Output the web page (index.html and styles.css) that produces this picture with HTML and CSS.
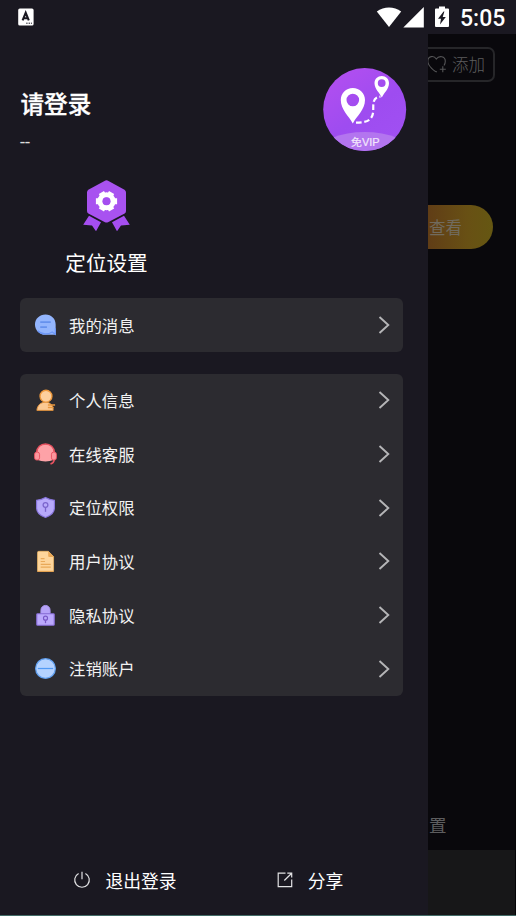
FILE: index.html
```html
<!DOCTYPE html>
<html lang="zh-CN">
<head>
<meta charset="utf-8">
<title>定位设置</title>
<link rel="stylesheet" href="styles.css">
</head>
<body>
<div class="screen">
  <header class="status">
    <svg class="ime" width="16" height="18" viewBox="0 0 16 18"><rect x="0.2" y="0.5" width="15.4" height="17" rx="1.6" fill="#fff"/><path d="M4.6 12.3L7.7 4.8L10.8 12.3M5.7 10.2H9.7" fill="none" stroke="#1a1821" stroke-width="2.1"/><path d="M8.2 15.2h1.4M10.6 15.2H12M12.9 15.2h1.1" stroke="#1a1821" stroke-width="1"/></svg>
    <div class="signals">
      <svg width="26" height="22" viewBox="0 0 26 22"><path d="M.8 5.6C8 .1 18 .1 25.2 5.6L13 21Z" fill="#fff"/></svg>
      <svg width="21" height="22" viewBox="0 0 21 22"><path d="M20.8 1V21.5H.3Z" fill="#fff"/></svg>
      <svg class="battery" width="14" height="22" viewBox="0 0 14 22"><path d="M4 .5h6v2h3q1 0 1 1V20q0 1-1 1H1q-1 0-1-1V3.5q0-1 1-1h3Z" fill="#fff"/><path d="M8.6 5.5L3 12.8H6L5 18.6L10.8 11H7.7L9.4 5.5Z" fill="#1a1821"/></svg>
      <span class="clock">5:05</span>
    </div>
  </header>
  <div class="body">
    <aside class="drawer">
      <section class="profile">
        <div class="account"><h1>请登录</h1><p>--</p></div>
        <svg class="avatar" width="84" height="84" viewBox="0 0 84 84">
          <defs><linearGradient id="violet" x1="0" y1="0" x2=".7" y2="1"><stop offset="0" stop-color="#b64ff0"/><stop offset=".6" stop-color="#9e4cf0"/><stop offset="1" stop-color="#a050f2"/></linearGradient><clipPath id="disc"><circle cx="41.7" cy="41.6" r="41.5"/></clipPath></defs>
          <circle cx="41.7" cy="41.6" r="41.5" fill="url(#violet)"/>
          <ellipse cx="41.7" cy="83" rx="45" ry="19" fill="#b375ef" clip-path="url(#disc)"/>
          <path fill="#fff" fill-rule="evenodd" d="M29.8 55.5C26 48 17.8 42 17.8 32C17.8 25 23 20 29.8 20S42 25 42 32C42 42 33.6 48 29.8 55.5ZM29.8 25.7a6.3 6.3 0 1 0 0 12.6a6.3 6.3 0 1 0 0-12.6Z"/>
          <path fill="#fff" fill-rule="evenodd" d="M58.8 29.5C57 25 51.5 21 51.5 15.2C51.5 11 54.7 8 58.8 8S66 11 66 15.2C66 21 60.8 25 58.8 29.5ZM58.7 11.2a3.9 3.9 0 1 0 0 7.8a3.9 3.9 0 1 0 0-7.8Z"/>
          <path d="M33 54.7C43 54.7 49 52.5 50 45C51 38 48 29.5 57.5 28.7" fill="none" stroke="#fff" stroke-width="2.2" stroke-dasharray="5.5 2.7"/>
          <text class="vip" x="28" y="78" textLength="28.5" lengthAdjust="spacingAndGlyphs">免VIP</text>
        </svg>
      </section>

      <section class="feature">
        <svg width="48" height="52" viewBox="0 0 48 52"><path d="M23.5 .2Q24.5 .2 25.5 .9L41.5 9.8Q43 10.8 43 12.5V31Q43 32.6 41.7 33.4L25 42.2Q23.5 43 22 42.2L5.3 33.4Q4 32.6 4 31V12.5Q4 10.8 5.3 9.8L21.5 .9Q22.5 .2 23.5 .2Z" fill="#a852f0"/><path d="M6 35.7L18 42.3L13 51.3L9 45.5L.2 44.8ZM41 35.7L29 42.3L34 51.3L38 45.5L46.8 44.8Z" fill="#a54ef0"/><circle cx="23.5" cy="21.2" r="6.4" fill="none" stroke="#fff" stroke-width="5.2"/><g stroke="#fff" stroke-width="6"><path d="M28.5 21.2H34.1M18.5 21.2H12.9M26 16.9L28.6 12.4M21 16.9L18.4 12.4M26 25.5L28.6 30M21 25.5L18.4 30"/></g><circle cx="23.5" cy="21.2" r="4" fill="#a54ef0"/></svg>
        <span>定位设置</span>
      </section>

      <nav class="card single">
        <a class="row"><svg class="icon" viewBox="0 0 24 24"><path d="M12 1.5C18.3 1.5 22.6 6 22.6 12V16.5L22.8 22.8H12C5.7 22.8 1 18 1 12S5.7 1.5 12 1.5Z" fill="#93b5fd"/><path d="M4 18.5C8 23 15 22.5 19 19.8L22.3 22.3V16" fill="none" stroke="#6c96f6" stroke-width="1.3"/><path d="M6.5 9.5h11M6.5 14.7h7" stroke="#6691ed" stroke-width="1.7"/></svg><span>我的消息</span><svg class="arrow" viewBox="0 0 12 18"><path d="M1.5 1L10.3 9L1.5 17"/></svg></a>
      </nav>

      <nav class="card group">
        <a class="row"><svg class="icon" viewBox="0 0 24 24"><path d="M3 22.3C3.5 16.8 7 14.2 11 13.8C16 13.5 20 16 20 22.3Z" fill="#fbc993" stroke="#e7953e"/><circle cx="12.5" cy="7.5" r="6.2" fill="#fdcf9d" stroke="#ef9a3e" stroke-width="1.4"/><path d="M14.5 16.8h7.5M14.5 19.4h6" stroke="#e9983f" stroke-width="1.6"/></svg><span>个人信息</span><svg class="arrow" viewBox="0 0 12 18"><path d="M1.5 1L10.3 9L1.5 17"/></svg></a>
        <a class="row"><svg class="icon" viewBox="0 0 24 24"><path d="M3 11C3 4.5 7 1.2 12 1.2S21 4.5 21 11V17.5Q12 21 3 17.5Z" fill="#fda2a7"/><path d="M2.6 10C3 4.5 7 1 12 1S21 4.5 21.4 10" fill="none" stroke="#e95260" stroke-width="1.5"/><rect x=".6" y="9.5" width="5.2" height="8.3" rx="2.3" fill="#fc969d" stroke="#e95260"/><rect x="18.2" y="9.5" width="5.2" height="8.3" rx="2.3" fill="#fc969d" stroke="#e95260"/><path d="M21 17.8Q20.8 20.8 17.2 22" fill="none" stroke="#e95260" stroke-width="1.7"/></svg><span>在线客服</span><svg class="arrow" viewBox="0 0 12 18"><path d="M1.5 1L10.3 9L1.5 17"/></svg></a>
        <a class="row"><svg class="icon" viewBox="0 0 24 24"><path d="M12 1.6Q16 4 21.3 4.4V12.5C21.3 17.5 17 20.7 12 22.4C7 20.7 2.7 17.5 2.7 12.5V4.4Q8 4 12 1.6Z" fill="#b8aafa" stroke="#8875dc" stroke-width="1.2"/><circle cx="12" cy="9.3" r="2.5" fill="none" stroke="#7b65cc" stroke-width="1.3"/><path d="M12 11.7V16.5" stroke="#7b65cc" stroke-width="1.4"/></svg><span>定位权限</span><svg class="arrow" viewBox="0 0 12 18"><path d="M1.5 1L10.3 9L1.5 17"/></svg></a>
        <a class="row"><svg class="icon" viewBox="0 0 24 24"><path d="M5 1.4H15L20.4 6.8V21.8Q20.4 22.4 19.8 22.4H4.3Q3.7 22.4 3.7 21.8V2.5Q3.7 1.4 5 1.4Z" fill="#fdd59b" stroke="#eeb766" stroke-width=".8"/><path d="M14.8 1.4L20.6 7.3H16Q14.8 7.3 14.8 6.2Z" fill="#eba855"/><path d="M7 9h4M7 12h4.5M7 15h10.5M7 17.8h10.5" stroke="#e9a958" stroke-width="1.3"/><path d="M3.4 22.3H20.6" stroke="#e5a04c"/></svg><span>用户协议</span><svg class="arrow" viewBox="0 0 12 18"><path d="M1.5 1L10.3 9L1.5 17"/></svg></a>
        <a class="row"><svg class="icon" viewBox="0 0 24 24"><path d="M7.2 10V6.5A4.8 5 0 0 1 16.8 6.5V10Z" fill="#b6a3f8" stroke="#ab96f1"/><rect x="2.9" y="10.2" width="18.2" height="12" rx=".8" fill="#bba9fc" stroke="#886dd7" stroke-width="1.2"/><circle cx="12" cy="14.8" r="2.1" fill="none" stroke="#7858c7" stroke-width="1.2"/><path d="M12 17v3" stroke="#7858c7" stroke-width="1.3"/></svg><span>隐私协议</span><svg class="arrow" viewBox="0 0 12 18"><path d="M1.5 1L10.3 9L1.5 17"/></svg></a>
        <a class="row"><svg class="icon" viewBox="0 0 24 24"><circle cx="12" cy="12" r="10.3" fill="#b5d3ff" stroke="#62a1f1" stroke-width="1.3"/><path d="M4 12h16" stroke="#529af4" stroke-width="1.3"/></svg><span>注销账户</span><svg class="arrow" viewBox="0 0 12 18"><path d="M1.5 1L10.3 9L1.5 17"/></svg></a>
      </nav>

      <footer class="actions">
        <a class="logout"><svg width="18" height="18" viewBox="0 0 18 18"><path d="M5.6 2.5A7.3 7.3 0 1 0 12.4 2.5M9 .7V8.3"/></svg><span>退出登录</span></a>
        <a class="share"><svg width="16" height="16" viewBox="0 0 16 16"><path d="M8.5 1.2H1.2V14.7H14.7V7.5M7.3 8.5L14.7 1.2M10.3 1.2H14.7V5.6"/></svg><span>分享</span></a>
      </footer>
    </aside>
    <main class="backdrop">
      <div class="add"><svg width="20" height="19" viewBox="0 0 20 19"><path d="M10 16.8C8 16.8.8 11 .8 6.2C.8.8 7 .2 9.3 4C12 .2 18.3 1 18.3 6.2Q18.3 8.5 17 10.5M15.8 11.2V17.2M12.8 14.2H18.8"/></svg><span>添加</span></div>
      <div class="view">查看</div>
      <div class="label">置</div>
      <div class="tray"></div>
    </main>
  </div>
</div>
</body>
</html>
```
FILE: styles.css
```css
* { box-sizing: border-box; }
body {
  margin: 0;
  background: #1a1821;
  color: #fff;
  font-family: "Noto Sans CJK SC", "Noto Sans", sans-serif;
}
.screen {
  width: 516px;
  height: 916px;
  display: flex;
  flex-direction: column;
  overflow: hidden;
  border-bottom: 1px solid #426b67;
}
.status {
  height: 34px;
  flex: none;
  display: flex;
  justify-content: space-between;
  align-items: center;
  padding: 0 11px 0 18px;
}
.signals { display: flex; align-items: center; gap: 1px; }
.signals svg:first-child { margin-left: -1px; }
.battery { margin-left: 10px; }
.clock {
  width: 45px;
  margin-left: 10px;
  font: 500 23px/34px Roboto, sans-serif;
  white-space: nowrap;
  padding-top: 3px;
}
.body { flex: 1; display: flex; min-height: 0; }
.drawer {
  width: 428px;
  flex: none;
  display: flex;
  flex-direction: column;
  padding: 0 25px 0 20px;
}
.profile {
  display: flex;
  justify-content: space-between;
  height: 145px;
  padding-top: 34px;
  margin-right: -4px;
}
.account h1 {
  margin: 18px 0 0 .5px;
  font-size: 23.6px;
  line-height: 34px;
  font-weight: 500;
  -webkit-text-stroke: .3px #fff;
}
.account p { margin: 10px 0 0; font: 18px/24px Roboto, sans-serif; color: #ddd; }
.vip { font: 10px "Liberation Sans", "Noto Sans CJK SC", sans-serif; fill: #f2e5fc; stroke: #f2e5fc; stroke-width: .2px; }
.feature {
  width: 173px;
  height: 119px;
  display: flex;
  flex-direction: column;
  align-items: center;
  padding-top: 1px;
}
.feature svg { margin-left: 1px; }
.feature span { font-size: 20.6px; line-height: 30px; margin-top: 15px; }
.card { background: #2c2b30; border-radius: 6px; flex: none; }
.single { margin-bottom: 22px; }
.row {
  height: 53.67px;
  display: flex;
  align-items: center;
  padding: 0 13px 0 14px;
  font-size: 16.4px;
  line-height: 24px;
  color: #f2f2f2;
}
.row span { margin-top: -1px; }
.single .row span { margin-top: 0; }
.icon { width: 23px; height: 23px; margin-right: 12px; }
.arrow { width: 12px; height: 18px; margin-left: auto; }
.arrow path { fill: none; stroke: #b5b5b7; stroke-width: 1.9; }
.actions { margin-top: auto; height: 71px; display: flex; align-items: center; }
.actions a { display: flex; align-items: center; font-size: 17.8px; line-height: 26px; }
.actions path { fill: none; stroke: #e2e2e4; stroke-width: 1.2; }
.logout { margin-left: 53px; gap: 14.5px; }
.share { margin-left: 100px; gap: 15px; }
.backdrop {
  flex: 1;
  min-width: 0;
  overflow: hidden;
  background: #09080c;
  border-right: 1px solid #050507;
  display: flex;
  flex-direction: column;
  color: #5d5d5f;
}
.add {
  width: 67px;
  height: 35px;
  margin-top: 13px;
  border: 2px solid #262629;
  border-left: 0;
  border-radius: 0 7px 7px 0;
  display: flex;
  align-items: center;
  font-size: 16.5px;
  font-weight: 300;
}
.add svg { margin: 0 5px 0 -1px; flex: none; }
.add path { fill: none; stroke: #555557; stroke-width: 1.1; }
.add span { white-space: nowrap; margin-top: -1px; }
.view {
  width: 65px;
  height: 44px;
  margin-top: 123px;
  border-radius: 0 22px 22px 0;
  background: linear-gradient(90deg, #603d16, #685014 60%, #655712);
  font-size: 16.5px;
  line-height: 44px;
  padding-left: 1px;
  color: #716b5e;
}
.label { margin-top: auto; height: 50px; font-size: 17.5px; line-height: 49px; padding-left: 1px; }
.tray { height: 65px; background: #171718; }
```
